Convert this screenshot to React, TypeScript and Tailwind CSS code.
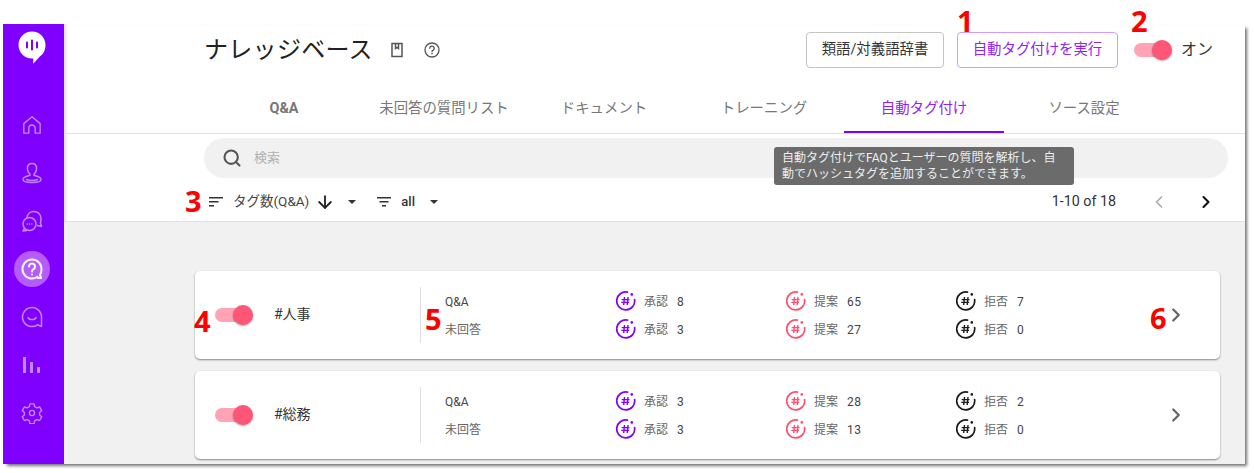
import { ArrowDown, ChevronLeft, ChevronRight, Search } from 'lucide-react'
import React from 'react'

const jp = 'font-[Roboto,"Noto_Sans_CJK_JP",sans-serif]'

const Logo = () => (
  <svg width="28" height="33" viewBox="0 0 28 33">
    <path d="M14 0.5C6.3 0.5 0.5 6.4 0.5 14S6.3 27.5 14 27.5h1.2l0 5.3 6.6-7.2C25.4 23.2 27.5 19 27.5 14 27.5 6.4 21.7 0.5 14 0.5Z" fill="#fff" />
    <path d="M9 11.5v5M14 9.5v9M19 11.5v5" stroke="#7f00ff" strokeWidth="2" strokeLinecap="round" />
  </svg>
)

const navStroke = { fill: 'none', stroke: '#c08aff', strokeWidth: 1.5, strokeLinejoin: 'round' as const, strokeLinecap: 'round' as const }

const HomeIcon = () => (
  <svg width="20" height="20" viewBox="0 0 22 22" {...navStroke}>
    <path d="M2 9.500 11 2l9 7.500V20h-5.500v-5.500a3.500 3.500 0 0 0-7 0V20H2Z" />
  </svg>
)
const UserIcon = () => (
  <svg width="22" height="22" viewBox="0 0 22 22" {...navStroke}>
    <path d="M11 1.500c3 0 4.600 2.300 4.600 5 0 2.600-1.400 4.600-2.300 5.600-.5.600-.3 1.300.4 1.500 3 .7 6.300 1.700 6.300 3.900 0 2-4.200 3-9 3s-9-1-9-3c0-2.200 3.300-3.200 6.300-3.900.7-.2.9-.9.4-1.500-.9-1-2.300-3-2.300-5.600 0-2.700 1.600-5 4.600-5Z" />
    <path d="M5.500 17.500c1.500.6 3.500.9 5.500.9s4-.3 5.500-.9" />
  </svg>
)
const ChatsIcon = () => (
  <svg width="22" height="22" viewBox="0 0 22 22" {...navStroke}>
    <path d="M6 7.500C6.500 4 9.500 1.500 13 1.500c4 0 7 3 7 6.800 0 2-.5 3.700-.5 5.200l1 3-4-1" />
    <circle cx="8.500" cy="14" r="6.500" />
    <path d="M3.500 18.500 2 21l3.500-.5" />
    <path d="M6.200 14h.1M8.500 14h.1M10.800 14h.1" />
  </svg>
)
const QuestionIcon = () => (
  <svg width="22" height="22" viewBox="0 0 22 22" fill="none" stroke="#fff" strokeWidth="2" strokeLinecap="round" strokeLinejoin="round">
    <path d="M16.500 18.800A9.500 9.500 0 1 1 20.500 11c0 2.500-.5 4.500-1.500 6l1 3h-3" />
    <path d="M8 8.500a3 3 0 1 1 4.500 2.600c-1 .6-1.500 1.100-1.500 2.400" />
    <path d="M11 16.500h.01" />
  </svg>
)
const SmileIcon = () => (
  <svg width="22" height="22" viewBox="0 0 22 22" {...navStroke}>
    <path d="M20.500 11A9.500 9.500 0 1 0 16.500 18.800L20.500 20.500Z" />
    <path d="M7 11.500c1 2.800 7 2.800 8 0" />
  </svg>
)
const BarsIcon = () => (
  <svg width="20" height="18" viewBox="0 0 20 18" fill="#c08aff">
    <rect x="1" y="1" width="3" height="16" />
    <rect x="8" y="6" width="3" height="11" />
    <rect x="15" y="11" width="3" height="6" />
  </svg>
)
const GearIcon = () => (
  <svg width="22" height="22" viewBox="0 0 24 24" {...navStroke}>
    <path d="M9.700 2h4.600l.6 3 2.500 1.400 2.900-1 2.300 4-2.300 2v2.800l2.300 2-2.300 4-2.900-1-2.500 1.400-.6 3H9.700l-.6-3-2.500-1.400-2.900 1-2.300-4 2.300-2v-2.800l-2.300-2 2.300-4 2.900 1L9.100 5Z" />
    <circle cx="12" cy="12" r="2.800" />
  </svg>
)

const HashIcon = ({ color }: { color: string }) => (
  <svg width="20" height="20" viewBox="0 0 20 20" fill="none" stroke={color}>
    <path d="M18.600 8.500A9 9 0 1 1 11.500 1.100" strokeWidth="1.700" strokeLinecap="round" />
    <circle cx="15.800" cy="3.400" r="1.300" fill={color} stroke="none" />
    <path d="M8.500 6 7.700 14M12 6 11.200 14M5.700 8.600h7.800M5.300 11.400h7.800" strokeWidth="1.400" />
  </svg>
)

const SortIcon = () => (
  <svg width="14" height="10" viewBox="0 0 14 10" fill="#333">
    <rect x="0" y="0" width="14" height="1.500" />
    <rect x="0" y="4" width="9.500" height="1.500" />
    <rect x="0" y="8" width="5" height="1.500" />
  </svg>
)
const FilterIcon = () => (
  <svg width="14" height="10" viewBox="0 0 14 10" fill="#333">
    <rect x="0" y="0" width="14" height="1.500" />
    <rect x="2.500" y="4" width="9" height="1.500" />
    <rect x="5" y="8" width="4" height="1.500" />
  </svg>
)
const Caret = () => (
  <svg width="8" height="4" viewBox="0 0 8 4" fill="#333">
    <path d="M0 0h8L4 4Z" />
  </svg>
)
const BookIcon = () => (
  <svg width="14" height="16" viewBox="0 0 14 16" fill="none" stroke="#555" strokeWidth="1.500">
    <rect x="2" y="1.500" width="10" height="13" />
    <path d="M5.500 1.500v5l1.500-1 1.500 1v-5" />
  </svg>
)
const HelpIcon = () => (
  <svg width="16" height="16" viewBox="0 0 16 16" fill="none" stroke="#555" strokeWidth="1.300" strokeLinecap="round">
    <circle cx="8" cy="8" r="7" />
    <path d="M5.800 6.300a2.200 2.200 0 1 1 3.400 1.800c-.8.500-1.200.9-1.200 1.700" />
    <path d="M8 11.800h.01" strokeWidth="1.600" />
  </svg>
)

const Toggle = () => (
  <div className="relative w-[38px] h-[22px] shrink-0 flex items-center">
    <div className="w-[34px] h-[14px] rounded-full bg-[#ffa3b5]" />
    <div className="absolute right-0 top-px w-5 h-5 rounded-full bg-[#ff5577] shadow-[0_1px_2px_rgba(0,0,0,0.35)]" />
  </div>
)

const Mark = ({ n, className }: { n: number; className: string }) => (
  <span className={`absolute font-['Noto_Sans'] font-bold text-[29px] leading-none text-[#ff0000] ${className}`}>{n}</span>
)

const navIcons = [<HomeIcon />, <UserIcon />, <ChatsIcon />, <QuestionIcon />, <SmileIcon />, <BarsIcon />, <GearIcon />]
const tabs = ['Q&A', '未回答の質問リスト', 'ドキュメント', 'トレーニング', '自動タグ付け', 'ソース設定']

const Stat = ({ color, label, value, width }: { color: string; label: string; value: number; width: string }) => (
  <div className={`flex items-center h-5 ${width}`}>
    <HashIcon color={color} />
    <span className="ml-[8px] pt-px text-xs text-[#666]">{label}</span>
    <span className="ml-[9px] pt-px text-xs tracking-[0.5px] text-[#444]">{value}</span>
  </div>
)

const rows = [
  { tag: '#人事', counts: [[8, 65, 7], [3, 27, 0]] },
  { tag: '#総務', counts: [[3, 28, 2], [3, 13, 0]] },
]

const TagCard = ({ tag, counts }: { tag: string; counts: number[][] }) => (
  <div className="flex items-center h-[88px] shrink-0 bg-white rounded-[5px] shadow-[0_1px_2px_rgba(0,0,0,0.45)]">
    <div className="ml-5"><Toggle /></div>
    <span className="ml-[21px] w-[146px] pb-[2px] text-[14px] text-[#333]">{tag}</span>
    <div className="w-px h-14 bg-[#e0e0e0]" />
    <div className="ml-6 flex flex-col gap-2">
      {['Q&A', '未回答'].map((label, i) => (
        <div key={label} className="flex items-center h-5 pt-px">
          <span className={`text-xs ${i === 0 ? 'text-[#444]' : 'text-[#666]'}`}>{label}</span>
        </div>
      ))}
    </div>
    <div className="ml-[135px] flex flex-col gap-2">
      {counts.map((c, i) => <Stat key={i} color="#7f00ff" label="承認" value={c[0]} width="w-[170px]" />)}
    </div>
    <div className="flex flex-col gap-2">
      {counts.map((c, i) => <Stat key={i} color="#ff4f70" label="提案" value={c[1]} width="w-[170px]" />)}
    </div>
    <div className="flex flex-col gap-2">
      {counts.map((c, i) => <Stat key={i} color="#1a1a1a" label="拒否" value={c[2]} width="w-[209px]" />)}
    </div>
    <ChevronRight size={22} strokeWidth={2.5} className="text-[#666]" />
  </div>
)

export default function App() {
  return (
    <div className={`relative w-[1254px] h-[473px] bg-white pl-[3px] pt-6 overflow-hidden ${jp}`}>
      <div className="flex w-[1242px] h-[440px] bg-white shadow-[3px_3px_3px_-1px_rgba(0,0,0,0.55)]">
        <aside className="w-[61px] shrink-0 bg-[#7f00ff] flex flex-col items-center pr-[3px]">
          <div className="mt-[7px] mb-[43px] h-[33px]"><Logo /></div>
          <div className="flex flex-col gap-3">
            {navIcons.map((icon, i) => (
              <div key={i} className={`w-9 h-9 flex items-center justify-center rounded-full ${i === 3 ? 'bg-[#b65cff]' : ''}`}>
                {icon}
              </div>
            ))}
          </div>
        </aside>
        <main className="flex-1 flex flex-col min-w-0 shadow-[inset_4px_0_4px_-3px_rgba(0,0,0,0.2)]">
          <div className="flex items-center h-[52px] pl-[140px] pr-[32px]">
            <h1 className="text-[24px] font-normal text-[#222] tracking-[0.3px]">ナレッジベース</h1>
            <div className="ml-[17px]"><BookIcon /></div>
            <div className="ml-[20px]"><HelpIcon /></div>
            <button className="ml-auto w-[138px] h-9 rounded-[4px] border border-[#c4c4c4] text-[14.4px] text-[#333]">類語/対義語辞書</button>
            <button className="ml-[13px] w-[161px] h-9 rounded-[4px] border border-[#cf9dff] text-[14.4px] text-[#8f22f5]">自動タグ付けを実行</button>
            <div className="ml-[16px]"><Toggle /></div>
            <span className="ml-[9px] text-[16px] text-[#333]">オン</span>
          </div>
          <div className="flex h-[58px] pt-[8px] pl-[140px] border-b border-[#e2e2e2]">
            {tabs.map((tab, i) => (
              <div key={tab} className={`w-40 flex items-center justify-center pt-[2px] text-[14.4px] border-b-2 ${i === 4 ? 'text-[#8f22f5] border-[#7f00ff]' : 'text-[#777] border-transparent'} ${i === 0 ? 'font-bold' : ''}`}>
                {tab}
              </div>
            ))}
          </div>
          <div className="mt-[4px] ml-[140px] mr-[17px] h-10 shrink-0 rounded-[20px] bg-[#f1f1f1] flex items-center pl-[18px]">
            <Search size={20} strokeWidth={2.5} className="text-[#555]" />
            <span className="ml-[12px] text-[13px] text-[#b0b0b0]">検索</span>
          </div>
          <div className="flex items-center h-[44px] shrink-0 pt-[4px] pl-[145px] pr-[29px] border-b border-[#e2e2e2]">
            <SortIcon />
            <span className="ml-[10px] text-[13.5px] text-[#444]">タグ数(Q&A)</span>
            <ArrowDown size={20} strokeWidth={2.2} className="ml-[6px] text-[#222]" />
            <div className="ml-[13px]"><Caret /></div>
            <div className="ml-[21px]"><FilterIcon /></div>
            <span className="ml-[10px] text-[13px] font-medium text-[#333]">all</span>
            <div className="ml-[15px]"><Caret /></div>
            <span className="ml-auto text-[14.3px] text-[#333]">1-10 of 18</span>
            <ChevronLeft size={20} className="ml-[33px] text-[#aaa]" />
            <ChevronRight size={20} strokeWidth={2.5} className="ml-[27px] text-[#111]" />
          </div>
          <div className="flex-1 bg-[#f1f1f1] pt-[49px] pl-[131px] pr-[25px] flex flex-col gap-3 overflow-hidden">
            {rows.map((r) => <TagCard key={r.tag} tag={r.tag} counts={r.counts} />)}
          </div>
        </main>
      </div>

      <div className="absolute left-[774px] top-[147px] w-[300px] h-[38px] rounded-[3px] bg-[#6b6b6b] px-[8px] py-[3px] text-xs leading-[16px] text-[#eee]">
        自動タグ付けでFAQとユーザーの質問を解析し、自動でハッシュタグを追加することができます。
      </div>

      <Mark n={1} className="left-[957px] top-[6px]" />
      <Mark n={2} className="left-[1131px] top-[6px]" />
      <Mark n={3} className="left-[185px] top-[186px]" />
      <Mark n={4} className="left-[194px] top-[306px]" />
      <Mark n={5} className="left-[425px] top-[304px]" />
      <Mark n={6} className="left-[1150px] top-[303px]" />
    </div>
  )
}
